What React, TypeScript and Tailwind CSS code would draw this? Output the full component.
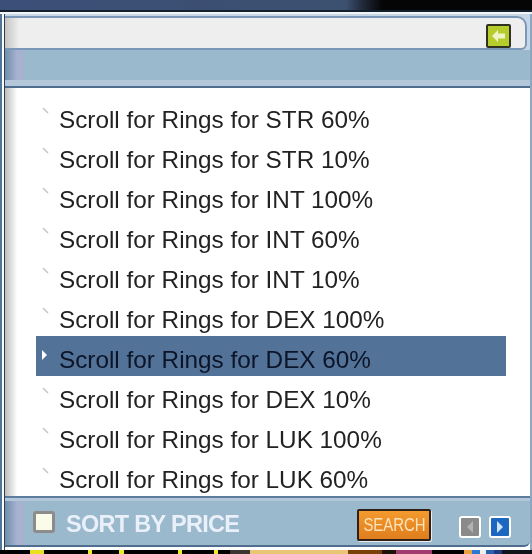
const rows = [
  "Scroll for Rings for STR 60%",
  "Scroll for Rings for STR 10%",
  "Scroll for Rings for INT 100%",
  "Scroll for Rings for INT 60%",
  "Scroll for Rings for INT 10%",
  "Scroll for Rings for DEX 100%",
  "Scroll for Rings for DEX 60%",
  "Scroll for Rings for DEX 10%",
  "Scroll for Rings for LUK 100%",
  "Scroll for Rings for LUK 60%",
]

// scraps of the page behind the window, visible under the bottom edge
const strip = [
  "w-[30px] bg-black",
  "w-[14px] bg-[#e8e020]",
  "w-[44px] bg-black",
  "w-[4px] bg-[#f0e828]",
  "w-[27px] bg-black",
  "w-[5px] bg-[#f0e828]",
  "w-[54px] bg-black",
  "w-[4px] bg-[#f0e828]",
  "w-[32px] bg-black",
  "w-[4px] bg-[#f0e828]",
  "w-[12px] bg-black",
  "w-[20px] bg-[#3c3630]",
  "w-[98px] bg-[#e8c675]",
  "w-[34px] bg-[#7a4208]",
  "w-[14px] bg-[#1c1408]",
  "w-[36px] bg-[#a03c70]",
  "w-[32px] bg-black",
  "w-[8px] bg-[#e8a040]",
  "w-[8px] bg-[#2a78d0]",
  "w-[6px] bg-[#f0f0e8]",
  "w-[8px] bg-[#2a60b0]",
  "w-[8px] bg-[#1c3c80]",
  "w-[30px] bg-[#101418]",
]

function Row({ label, selected }: { label: string; selected: boolean }) {
  return (
    <div className={`flex h-10 w-[470px] items-center pt-[7px] ${selected ? "bg-[#527297] text-[#0c1428]" : "text-[#222222]"}`}>
      {selected ? (
        <svg width="8" height="14" viewBox="0 0 8 14" className="mb-[9px] ml-[5px] mr-[10px] shrink-0">
          <path d="M1 2 L6 7 L1 12 Z" fill="#ffffff" />
        </svg>
      ) : (
        <svg width="8" height="14" viewBox="0 0 8 14" className="mb-[13px] ml-[5px] mr-[10px] shrink-0">
          <path d="M2 2 L7 7" stroke="#c4c4c4" strokeWidth="1.4" />
        </svg>
      )}
      <span className="whitespace-nowrap text-[24.3px] leading-[28px] blur-[0.4px]">{label}</span>
    </div>
  )
}

export default function App() {
  return (
    <div className="flex h-[554px] w-[532px] flex-col overflow-hidden bg-white font-['Liberation_Sans',Arial,sans-serif]">
      <div className="h-[10px] shrink-0 bg-linear-to-r from-[#3c4f78] via-[#3c5070] via-65% to-[#050505] to-72%" />
      <div className="h-[2px] shrink-0 bg-[#14202e]" />
      <div className="h-[2px] shrink-0 bg-[#f2f5f8]" />

      <div className="flex h-[536px] shrink-0">
        <div className="w-[5px] shrink-0 border-r border-[#2c3e50] bg-linear-to-r from-[#4f7699] from-[2px] to-white to-[2px]" />
        <div className="flex min-w-0 flex-1 flex-col border-r-[2px] border-[#8aa6c0]">
          <div className="h-[2px] shrink-0 bg-[#c6d6e4]" />
          <div className="flex h-[34px] shrink-0 items-start bg-[#c6d6e4]">
            <div className="mr-[3px] flex h-[34px] flex-1 items-start justify-end rounded-tr-[10px] rounded-br-[6px] border-y-[2px] border-r-[2px] border-[#7b98b8] bg-linear-to-r from-[#c4c4c4] to-[#eeeeee] to-[14px] pr-[14px] pt-[6px]">
              <div className="flex h-[24px] w-[25px] items-center justify-center rounded-[2px] border-[2px] border-[#2e3320] bg-[#b6cb2c]">
                <svg width="16" height="14" viewBox="0 0 16 14" className="blur-[0.4px]">
                  <path d="M1 7 L7 1 V4.5 H14 V9.5 H7 V13 Z" fill="#eef4c8" />
                </svg>
              </div>
            </div>
          </div>
          <div className="h-[30px] shrink-0 bg-[linear-gradient(90deg,#6f8fab_0,#a6b2d0_12px,#a6b2d0_19px,#9ab9cc_19px)]" />
          <div className="h-[6px] shrink-0 bg-[#b4c6da]" />
          <div className="h-[2px] shrink-0 bg-[#4f6e8e]" />
          <div className="flex h-[408px] shrink-0 flex-col bg-linear-to-r from-[#bdbdbd] to-white to-[12px] pl-[31px] pt-[8px]">
            {rows.map((r, i) => (
              <Row key={r} label={r} selected={i === 6} />
            ))}
          </div>
          <div className="h-[2px] shrink-0 bg-[#5b7c9c]" />
          <div className="h-[3px] shrink-0 bg-[#b4c6da]" />
          <div className="flex h-[46px] shrink-0 items-start rounded-br-[6px] border-b-[2px] border-[#4f6e8e] bg-[linear-gradient(90deg,#6f8fab_0,#a6b2d0_12px,#a6b2d0_19px,#9ab9cc_19px)] pl-[28px]">
            <div className="mt-[10px] h-[22px] w-[22px] rounded-[3px] border-[3px] border-[#8c8c8c] bg-[#fbfbe9]" />
            <span className="ml-[11px] mt-[9px] whitespace-nowrap text-[23.5px] font-bold leading-[28px] tracking-[-0.7px] text-[#e9f0fa] blur-[0.3px]">SORT BY PRICE</span>
            <button className="ml-[118px] mt-[8px] flex h-[32px] w-[74px] items-center justify-center rounded-[2px] border-[2px] border-[#2c2018] bg-linear-to-b from-[#f39a2e] to-[#e07e1d] shadow-[1px_1px_0_#e8eef4]">
              <span className="scale-x-[0.83] whitespace-nowrap text-[18px] text-[#fde3bb] blur-[0.3px]">SEARCH</span>
            </button>
            <div className="ml-[28px] mt-[15px] flex h-[22px] w-[22px] items-center justify-center rounded-[3px] border-[2px] border-white bg-[#8a8a8a]">
              <svg width="10" height="14" viewBox="0 0 10 14" className="blur-[0.5px]">
                <path d="M8 1 L2 7 L8 13 Z" fill="#b2b2b2" />
              </svg>
            </div>
            <div className="ml-[8px] mt-[15px] flex h-[22px] w-[22px] items-center justify-center rounded-[3px] border-[2px] border-white bg-[#1c68c0]">
              <svg width="10" height="14" viewBox="0 0 10 14" className="blur-[0.4px]">
                <path d="M2 1 L8 7 L2 13 Z" fill="#cfe4f8" />
              </svg>
            </div>
          </div>
          <div className="h-[3px] shrink-0 bg-white" />
        </div>
      </div>
      <div className="flex h-[4px] shrink-0 bg-black">
        {strip.map((c, i) => (
          <div key={i} className={c} />
        ))}
      </div>
    </div>
  )
}
